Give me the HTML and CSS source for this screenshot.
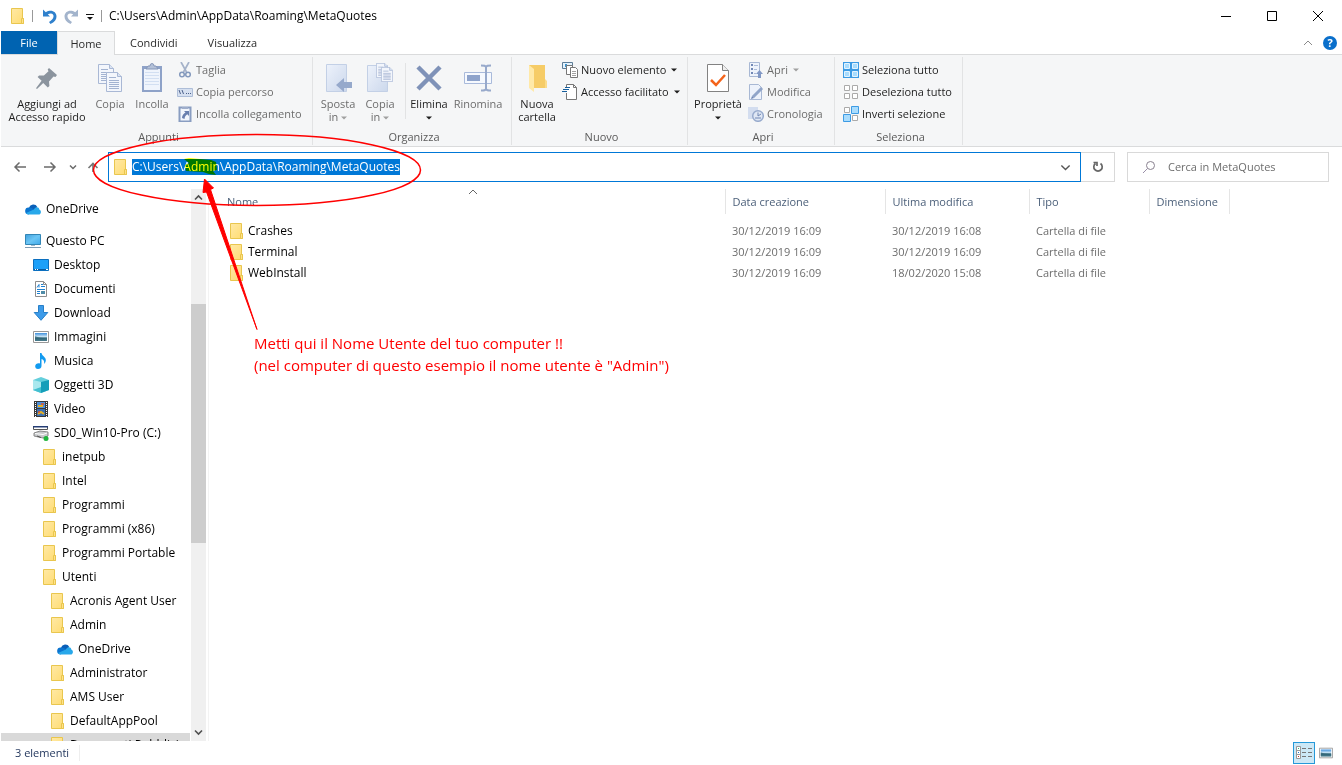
FILE: index.html
```html
<!DOCTYPE html>
<html lang="it">
<head>
<meta charset="utf-8">
<title>C:\Users\Admin\AppData\Roaming\MetaQuotes</title>
<link rel="stylesheet" href="styles.css">
</head>
<body>
<svg class="defs" aria-hidden="true">
  <defs>
    <linearGradient id="gFolder" x1="0" y1="0" x2="1" y2="1"><stop offset="0" stop-color="#ffe9a6"/><stop offset="1" stop-color="#ffdc72"/></linearGradient>
    <linearGradient id="gScreen" x1="0" y1="0" x2="1" y2="1"><stop offset="0" stop-color="#3f9fdc"/><stop offset=".5" stop-color="#6cc6f5"/><stop offset="1" stop-color="#3fa9ea"/></linearGradient>
    <linearGradient id="gPaper" x1="0" y1="0" x2="1" y2="1"><stop offset="0" stop-color="#edf2fb"/><stop offset="1" stop-color="#ccd8ec"/></linearGradient>
    <linearGradient id="gPic" x1="0" y1="0" x2="0" y2="1"><stop offset="0" stop-color="#3d8fdc"/><stop offset=".5" stop-color="#d6ecf7"/><stop offset=".6" stop-color="#2c6477"/><stop offset="1" stop-color="#7fa9b5"/></linearGradient>
    <symbol id="folder" viewBox="-1 0 16 16"><path d="M1.500.5h11v10h1v5h-12z" fill="url(#gFolder)" stroke="#e9c64e"/><path d="M11.500 15.500v-5h2v5z" fill="#ffe28a" stroke="#e9c64e"/></symbol>
    <symbol id="cloud" viewBox="0 0 16 16"><path d="M4 6.500a4.500 4.500 0 0 1 8.300-.6L8 10z" fill="#0a5fb8"/><path d="M3.500 13.500A3.500 3.500 0 0 1 3.800 6.500c2-.4 3.200.4 5.400 2z" fill="#0b74cf"/><path d="M9 8.600c1-3 5-3.200 5.300-.2 2.500 1 2 5.100-.8 5.100H3.500c-1 0-2-.6-2.500-1.500z" fill="#28a8ea"/></symbol>
    <symbol id="pc" viewBox="0 0 16 16"><path d="M.5 1.500h15v10H.5z" fill="url(#gScreen)" stroke="#3386b6"/><path d="M6 12.500h4" stroke="#9db8cc"/><path d="M0 14.500h16" stroke="#7f9cb4"/></symbol>
    <symbol id="desktop" viewBox="0 0 16 16"><path d="M.5 2.500h15v11H.5z" fill="#1ca0f9" stroke="#0b6fbf"/><path d="M1 12.500h14" stroke="#0a5ba0"/><path d="M2 12.500h1m1 0h1m8 0h2" stroke="#fff"/></symbol>
    <symbol id="doc" viewBox="0 0 16 16"><path d="M2.500.5h8l3 3v12h-11z" fill="#fff" stroke="#8d8d8d"/><path d="M10.500.5v3h3" fill="none" stroke="#8d8d8d"/><path d="M4 6.500l2-3v3M8 3.500h2M8 5.500h4M4 8.500h8M4 10.500h3M4 12.500h3" fill="none" stroke="#1e80d0"/><path d="M8 10h4v3H8z" fill="#4f8ca8"/></symbol>
    <symbol id="down" viewBox="0 0 16 16"><path d="M5.500.5h5v7h4.300L8 15.300 1.200 7.500h4.300z" fill="#3d9be9" stroke="#277fc8"/></symbol>
    <symbol id="pic" viewBox="0 0 16 16"><path d="M.5 2.500h15v11H.5z" fill="#fff" stroke="#989898"/><path d="M2 4h12v8H2z" fill="url(#gPic)"/><path d="M2 7l4 1.500 8 1V12H2z" fill="#295f72" opacity=".6"/></symbol>
    <symbol id="music" viewBox="0 0 16 16"><path d="M7 0h1.500c.3 3 4.700 4 4.300 7.500-.1 1.500-.8 2.500-1.800 3.500.8-3-.8-4.500-2.500-5v7c0 1.800-1.500 3-3.500 3S2.200 14.700 2.200 13.200c0-2 2.500-3.400 4.800-2.600z" fill="#129bf0"/></symbol>
    <symbol id="cube" viewBox="0 0 16 16"><path d="M0 3L8 0l8 3v10l-8 3-8-3z" fill="#64cfdc"/><path d="M8 5l8-2v10l-8 3z" fill="#159eb9"/><path d="M0 3l8 2v6l-8 2z" fill="#a9e8ee"/><path d="M0 13l8-3v6z" fill="#43bfd0"/></symbol>
    <symbol id="film" viewBox="0 0 16 16"><path d="M1 0h14v16H1z" fill="#383838"/><path d="M2.500 1v15M13.500 1v15" stroke="#fff" stroke-dasharray="1 1"/><path d="M4 1h8v6H4z" fill="#4d8ed8"/><path d="M4 8h8v7H4z" fill="#3a70b4"/><path d="M5 5h5M5 13l3-2 3 2" stroke="#e7b024" stroke-width="2" fill="none"/><path d="M8 3h3M5 11h2" stroke="#df5631" stroke-width="1.500"/></symbol>
    <symbol id="drive" viewBox="0 0 16 16"><path d="M.5 1.500h14v3H.5z" fill="#fff" stroke="#555"/><path d="M0 1h15v1.500H0z" fill="#243c74"/><path d="M1 8l6-2 8 1v4l-5 2-9-2z" fill="#c8cacc" stroke="#888"/><path d="M2 8.500l8 1 4-1.500" stroke="#fff" fill="none"/><path d="M4 11l4 1.500" stroke="#555"/><circle cx="13" cy="13.500" r="2.500" fill="#1eb53c"/></symbol>
    <symbol id="sheet" viewBox="0 0 16 20"><path d="M.5.500h11l4 4v15H.5z" fill="#f3f6fc" stroke="#a9b8d5"/><path d="M11.500.5v4h4" fill="#dbe4f3" stroke="#a9b8d5"/><path d="M3 5.500h7M3 8.500h10M3 10.500h10M3 12.500h10M3 14.500h10M3 16.500h10" stroke="#a3b3d1"/></symbol>
    <symbol id="chev" viewBox="0 0 8 8"><path d="M1 2.500l3 3 3-3" fill="none" stroke="currentColor"/></symbol>
    <symbol id="tri" viewBox="0 0 6 4"><path d="M0 .5h6l-3 3z" fill="currentColor"/></symbol>
  </defs>
</svg>

<div class="window">
  <header class="titlebar">
    <svg class="i16"><use href="#folder"/></svg>
    <span class="bar"></span>
    <div class="quickbar">
      <button class="plain" aria-label="Annulla"><svg class="i16" viewBox="0 0 16 16"><path d="M1 1.500v7h7L5.800 6.300C9.500 4.500 12 6 11.500 8.800c-.3 2-2 3.500-4.500 5.200l1.500 2c4-2 6-4.500 6-7.500C14.500 3.500 9 .8 3.800 4.200z" fill="#2f80cc"/></svg></button>
      <button class="plain" aria-label="Ripeti"><svg class="i16" viewBox="0 0 16 16"><path d="M14 1.500v7H7l2.200-2.200C5.500 4.500 3 6 3.500 8.800c.3 2 2 3.500 4.500 5.200l-1.500 2c-4-2-6-4.500-6-7.500C.5 3.500 6 .8 11.200 4.200z" fill="#a3b4cc"/></svg></button>
      <button class="plain quick" aria-label="Personalizza"><svg width="8" height="8" viewBox="0 0 8 8"><path d="M0 1.500h8" stroke="#111"/><path d="M1 4h6L4 7z" fill="#111"/></svg></button>
    </div>
    <span class="bar"></span>
    <h1>C:\Users\Admin\AppData\Roaming\MetaQuotes</h1>
    <div class="winbtns">
      <button class="plain" aria-label="Riduci a icona"><svg width="12" height="12" viewBox="0 0 12 12"><path d="M1 6.500h10" stroke="#000"/></svg></button>
      <button class="plain" aria-label="Ingrandisci"><svg width="12" height="12" viewBox="0 0 12 12"><path d="M1.500 1.500h9v9h-9z" fill="none" stroke="#000"/></svg></button>
      <button class="plain" aria-label="Chiudi"><svg width="12" height="12" viewBox="0 0 12 12"><path d="M1 1l10 10M11 1L1 11" stroke="#000"/></svg></button>
    </div>
  </header>

  <nav class="tabs">
    <button class="tab file">File</button>
    <button class="tab active">Home</button>
    <button class="tab">Condividi</button>
    <button class="tab">Visualizza</button>
    <div class="tabend">
      <button class="plain" aria-label="Riduci barra multifunzione"><svg width="10" height="8" viewBox="0 0 10 8"><path d="M1 6l4-4 4 4" fill="none" stroke="#8b8b8b"/></svg></button>
      <button class="plain help" aria-label="Guida">?</button>
    </div>
  </nav>

  <section class="ribbon">
    <div class="group g-clip">
      <div class="tools">
        <button class="big w-pin"><svg width="24" height="30" viewBox="0 0 24 30"><path d="M14 5l8 7-1.500 2-2-.4-4.500 5 .4 4.400-1.600 1.500-4.600-4.400L2 26l-1-.8 5.600-7.500-4-3.600 1.500-1.700 4.800.2 4.600-4.400-.8-1.700z" fill="#8b949e"/></svg>Aggiungi ad<br>Accesso rapido</button>
        <button class="big w-42 off"><svg width="26" height="30" viewBox="0 0 26 30"><use href="#sheet" x="1" y="1" width="16" height="20"/><use href="#sheet" x="9" y="9" width="16" height="20"/></svg>Copia</button>
        <button class="big w-42 off"><svg width="22" height="30" viewBox="0 0 22 30"><path d="M1 3h20v26H1z" fill="#8ea2c8"/><path d="M3 6h16v21H3z" fill="#eff4fc"/><path d="M4 9.500h14M4 12.500h14M4 15.500h14M4 18.500h14M4 21.500h14" stroke="#d2dff2"/><path d="M5 6l2-3h2a2 2.500 0 0 1 4 0h2l2 3z" fill="#b4c1d8" stroke="#8596b8"/></svg>Incolla</button>
        <div class="list">
          <button class="small off"><svg class="i16" viewBox="0 0 16 16"><path d="M4 0l5.500 10M12 0L6.500 10" stroke="#a5b2c9" stroke-width="1.700"/><circle cx="5" cy="12.500" r="2.300" fill="none" stroke="#8499bd" stroke-width="1.500"/><circle cx="11" cy="12.500" r="2.300" fill="none" stroke="#8499bd" stroke-width="1.500"/></svg>Taglia</button>
          <button class="small off"><svg class="i16" viewBox="0 0 16 16"><path d="M.5 4.500h15v8H.5z" fill="#d6e0f0" stroke="#aebed8"/><path d="M2 6l1.500 4M5 6l1.500 4M9 9.500h1m1 0h1m1 0h1" stroke="#4c618b"/></svg>Copia percorso</button>
          <button class="small off"><svg class="i16" viewBox="0 0 16 16"><path d="M2.500 1.500h11v14h-11z" fill="#f2f6fc" stroke="#899dc1" stroke-width="2"/><path d="M5 1h6v2H5z" fill="#9faecb"/><path d="M7 5h5v5l-1.700-1.700C8.500 9.500 7.700 11 7.500 13L5 12c0-2.500 1.500-4.200 3.500-5.500z" fill="#687fae"/></svg>Incolla collegamento</button>
        </div>
      </div>
      <div class="caption">Appunti</div>
    </div>
    <div class="group g-org">
      <div class="tools">
        <button class="big w-42 off"><svg width="28" height="30" viewBox="0 0 28 30"><path d="M2.500 1.500h20v27h-20z" fill="url(#gPaper)" stroke="#c3d0e6"/><path d="M12 22l8-7v4h8v6h-8v4z" fill="#96a9cb"/></svg>Sposta<br>in <svg class="tri"><use href="#tri"/></svg></button>
        <button class="big w-42 off"><svg width="28" height="30" viewBox="0 0 28 30"><path d="M1.500 2.500h20v26h-20z" fill="url(#gPaper)" stroke="#c3d0e6"/><use href="#sheet" x="10" y="0" width="12" height="15"/><use href="#sheet" x="15" y="4" width="12" height="15"/></svg>Copia<br>in <svg class="tri"><use href="#tri"/></svg></button>
        <span class="sep"></span>
        <button class="big w-46"><svg width="28" height="30" viewBox="0 0 28 30"><path d="M3 4l22 22M25 4L3 26" stroke="#7f92b8" stroke-width="4.500"/></svg>Elimina<br><svg class="tri"><use href="#tri"/></svg></button>
        <button class="big w-52 off"><svg width="30" height="30" viewBox="0 0 30 30"><path d="M1.500 9.500h27v11h-27z" fill="#f6f9fe" stroke="#a9badb"/><path d="M4 12h13v6H4z" fill="#8ea3cb"/><path d="M23 3v24M18 2.500c3 0 5 0 5 2 0-2 2-2 5-2M18 27.500c3 0 5 0 5-2 0 2 2 2 5 2" fill="none" stroke="#97a9cb" stroke-width="2"/></svg>Rinomina</button>
      </div>
      <div class="caption">Organizza</div>
    </div>
    <div class="group g-new">
      <div class="tools">
        <button class="big w-42"><svg width="26" height="30" viewBox="0 0 26 30"><path d="M5 2h16v15l2 2v6H8z" fill="#f6cc67"/><path d="M5 2l5 4v23l-5-4z" fill="#ffe9a8"/><path d="M21 16l2 2v7h-2z" fill="#fbdc8b"/></svg>Nuova<br>cartella</button>
        <div class="list">
          <button class="small"><svg class="i16" viewBox="0 0 16 16"><path d="M.5.500h10v6H.5z" fill="#e5f3fd" stroke="#5c7c97"/><path d="M3 2h2v3H3zm3 1h3v2H6z" fill="#3a93d0"/><path d="M4.500 3.500h6v9h-6z" fill="#fff" stroke="#777"/><path d="M8.500 5.500h5l2 2v8h-7z" fill="#fff" stroke="#777"/><path d="M10 9.500h4M10 11.500h4M10 13.500h4" stroke="#a1a1a1"/></svg>Nuovo elemento <svg class="tri"><use href="#tri"/></svg></button>
          <button class="small"><svg class="i16" viewBox="0 0 16 16"><path d="M4.500 4V.5h7l3 3v12h-10V9" fill="#fff" stroke="#777"/><path d="M11.500.5v3h3" fill="none" stroke="#777"/><path d="M3 3.500h5M1 5.500h6M0 7.500h5" stroke="#175f9d"/></svg>Accesso facilitato <svg class="tri"><use href="#tri"/></svg></button>
        </div>
      </div>
      <div class="caption">Nuovo</div>
    </div>
    <div class="group g-open">
      <div class="tools">
        <button class="big w-52"><svg width="22" height="30" viewBox="0 0 22 30"><path d="M.5 1.500h15l6 6v21H.5z" fill="#fff" stroke="#828282"/><path d="M15.500 1.500v6h6" fill="#eee" stroke="#828282"/><path d="M4 17l5 5 9-10" fill="none" stroke="#f4641b" stroke-width="2.500"/></svg>Proprietà<br><svg class="tri"><use href="#tri"/></svg></button>
        <div class="list">
          <button class="small off"><svg class="i16" viewBox="0 0 16 16"><path d="M1.500.5h10v14h-10z" fill="#eef3fb" stroke="#a8b8d4"/><path d="M3 2h2v2H3zm0 4h2v2H3zm0 4h2v2H3z" fill="#7188b5"/><path d="M6 3.500h4M6 7.500h3M6 11.500h2" stroke="#adbcd8"/><path d="M10 16v-4H8l3.500-4 3.500 4h-2v4z" fill="#8198c5"/></svg>Apri <svg class="tri"><use href="#tri"/></svg></button>
          <button class="small off"><svg class="i16" viewBox="0 0 16 16"><path d="M1.500.5h9l3 3v12h-12z" fill="#edf2fb" stroke="#a8b8d4"/><path d="M5 13L14 4" stroke="#91a5c9" stroke-width="3"/><path d="M3 15l1-3 2 2z" fill="#6f86b4"/></svg>Modifica</button>
          <button class="small off"><svg class="i16" viewBox="0 0 16 16"><path d="M0 1h10v12H0z" fill="#d3ddef"/><circle cx="10" cy="10" r="5.300" fill="#dfe7f4" stroke="#98abcd" stroke-width="1.500"/><path d="M10 6.500V10l3-2M7 12h6" stroke="#7087b3" fill="none"/></svg>Cronologia</button>
        </div>
      </div>
      <div class="caption">Apri</div>
    </div>
    <div class="group g-sel">
      <div class="tools">
        <div class="list">
          <button class="small"><svg class="i16" viewBox="0 0 16 16"><path d="M0 0h16v16H0z" fill="#3d9be4"/><path d="M1.500 1.500h5v5h-5zm8 0h5v5h-5zm-8 8h5v5h-5zm8 0h5v5h-5z" fill="#a9dcfd" stroke="#e3f4ff"/></svg>Seleziona tutto</button>
          <button class="small"><svg class="i16" viewBox="0 0 16 16"><path d="M1.500 1.500h5v5h-5zm8 0h5v5h-5zm-8 8h5v5h-5zm8 0h5v5h-5z" fill="#fff" stroke="#aaa"/></svg>Deseleziona tutto</button>
          <button class="small"><svg class="i16" viewBox="0 0 16 16"><path d="M1.500 1.500h5v5h-5zm8 8h5v5h-5z" fill="#fff" stroke="#aaa"/><path d="M8.500.500h7v7h-7zm-8 8h7v7h-7z" fill="#a9dcfd" stroke="#3d9be4"/></svg>Inverti selezione</button>
        </div>
      </div>
      <div class="caption">Seleziona</div>
    </div>
  </section>

  <section class="address">
    <div class="navbtns">
      <button class="plain nav-wide" aria-label="Indietro"><svg width="14" height="12" viewBox="0 0 14 12"><path d="M13 6H2M6.500 1.500L2 6l4.500 4.500" fill="none" stroke="#6b6b6b" stroke-width="1.500"/></svg></button>
      <button class="plain nav-mid" aria-label="Avanti"><svg width="14" height="12" viewBox="0 0 14 12"><path d="M1 6h11M7.500 1.500L12 6l-4.500 4.500" fill="none" stroke="#6b6b6b" stroke-width="1.500"/></svg></button>
      <button class="plain nav-small" aria-label="Percorsi recenti"><svg width="8" height="8" viewBox="0 0 8 8"><path d="M1 2.500l3 3 3-3" fill="none" stroke="#6b6b6b" stroke-width="1.500"/></svg></button>
      <button class="plain" aria-label="Su"><svg width="12" height="12" viewBox="0 0 12 12"><path d="M6 11V3M1.500 7L6 2.500 10.500 7" fill="none" stroke="#777" stroke-width="1.700"/></svg></button>
    </div>
    <div class="pathbox">
      <svg class="i16"><use href="#folder"/></svg>
      <div class="pathwrap">
        <input class="path" type="text" size="42" aria-label="Indirizzo" value="C:\Users\Admin\AppData\Roaming\MetaQuotes">
        <svg class="marker" width="40" height="22" viewBox="0 0 40 22"><path d="M3 3l5-1 22 2 5 2 1 8-4 1 3 4-7-1-6-2-17-1-1-6 4-2z" fill="#ff0"/></svg>
      </div>
      <button class="plain" aria-label="Località precedenti"><svg width="11" height="11"><use href="#chev"/></svg></button>
    </div>
    <button class="refresh" aria-label="Aggiorna"><svg width="12" height="12" viewBox="0 0 12 12"><path d="M8.500 2.500a4.200 4.200 0 1 1-5 0M1.500 1.500H5V5" fill="none" stroke="#666" stroke-width="1.700"/></svg></button>
    <label class="search"><svg width="14" height="14" viewBox="0 0 14 14"><circle cx="8.500" cy="5.500" r="4" fill="none" stroke="#8a8290"/><path d="M5.500 8.500L1 13" stroke="#9a8fa8"/></svg><input type="search" placeholder="Cerca in MetaQuotes" aria-label="Cerca in MetaQuotes"></label>
  </section>

  <main class="body">
    <nav class="tree">
      <ul>
        <li class="l0 gap"><svg class="i16"><use href="#cloud"/></svg>OneDrive</li>
        <li class="l0"><svg class="i16"><use href="#pc"/></svg>Questo PC</li>
        <li class="l1"><svg class="i16"><use href="#desktop"/></svg>Desktop</li>
        <li class="l1"><svg class="i16"><use href="#doc"/></svg>Documenti</li>
        <li class="l1"><svg class="i16"><use href="#down"/></svg>Download</li>
        <li class="l1"><svg class="i16"><use href="#pic"/></svg>Immagini</li>
        <li class="l1"><svg class="i16"><use href="#music"/></svg>Musica</li>
        <li class="l1"><svg class="i16"><use href="#cube"/></svg>Oggetti 3D</li>
        <li class="l1"><svg class="i16"><use href="#film"/></svg>Video</li>
        <li class="l1"><svg class="i16"><use href="#drive"/></svg>SD0_Win10-Pro (C:)</li>
        <li class="l2"><svg class="i16"><use href="#folder"/></svg>inetpub</li>
        <li class="l2"><svg class="i16"><use href="#folder"/></svg>Intel</li>
        <li class="l2"><svg class="i16"><use href="#folder"/></svg>Programmi</li>
        <li class="l2"><svg class="i16"><use href="#folder"/></svg>Programmi (x86)</li>
        <li class="l2"><svg class="i16"><use href="#folder"/></svg>Programmi Portable</li>
        <li class="l2"><svg class="i16"><use href="#folder"/></svg>Utenti</li>
        <li class="l3"><svg class="i16"><use href="#folder"/></svg>Acronis Agent User</li>
        <li class="l3"><svg class="i16"><use href="#folder"/></svg>Admin</li>
        <li class="l4"><svg class="i16"><use href="#cloud"/></svg>OneDrive</li>
        <li class="l3"><svg class="i16"><use href="#folder"/></svg>Administrator</li>
        <li class="l3"><svg class="i16"><use href="#folder"/></svg>AMS User</li>
        <li class="l3"><svg class="i16"><use href="#folder"/></svg>DefaultAppPool</li>
        <li class="l3 sel"><svg class="i16"><use href="#folder"/></svg>Documenti Pubblici</li>
      </ul>
    </nav>
    <div class="scroll">
      <svg width="9" height="9" viewBox="0 0 9 9"><path d="M1 6.500L4.500 3 8 6.500" fill="none" stroke="#505050" stroke-width="1.600"/></svg>
      <div class="track"><div class="thumb"></div></div>
      <svg width="9" height="9" viewBox="0 0 9 9"><path d="M1 2.500L4.500 6 8 2.500" fill="none" stroke="#505050" stroke-width="1.600"/></svg>
    </div>
    <div class="files">
      <table>
        <colgroup><col class="c-name"><col class="c-made"><col class="c-mod"><col class="c-type"><col class="c-size"></colgroup>
        <thead><tr><th>Nome<svg class="sort" width="10" height="6" viewBox="0 0 10 6"><path d="M1 5l4-4 4 4" fill="none" stroke="#666"/></svg></th><th>Data creazione</th><th>Ultima modifica</th><th>Tipo</th><th>Dimensione</th></tr></thead>
        <tbody>
          <tr><td><span class="name"><svg class="i16"><use href="#folder"/></svg>Crashes</span></td><td>30/12/2019 16:09</td><td>30/12/2019 16:08</td><td>Cartella di file</td><td></td></tr>
          <tr><td><span class="name"><svg class="i16"><use href="#folder"/></svg>Terminal</span></td><td>30/12/2019 16:09</td><td>30/12/2019 16:09</td><td>Cartella di file</td><td></td></tr>
          <tr><td><span class="name"><svg class="i16"><use href="#folder"/></svg>WebInstall</span></td><td>30/12/2019 16:09</td><td>18/02/2020 15:08</td><td>Cartella di file</td><td></td></tr>
        </tbody>
      </table>
      <p class="note">Metti qui il Nome Utente del tuo computer !!<br>(nel computer di questo esempio il nome utente è "Admin")</p>
    </div>
  </main>

  <footer class="status">
    <span class="count">3 elementi</span>
    <div class="views">
      <button class="view on" aria-label="Dettagli"><svg width="16" height="14" viewBox="0 0 16 14"><path d="M.5.500h4v4h-4zm0 4h4v4h-4zm0 4h4v4h-4z" fill="#fff" stroke="#999"/><path d="M2 2.500h1" stroke="#3b7"/><path d="M2 6.500h1" stroke="#27c"/><path d="M2 10.500h1" stroke="#c32"/><path d="M6 2.500h4m2 0h4M6 6.500h4m2 0h4M6 10.500h4m2 0h4" stroke="#777"/></svg></button>
      <button class="view" aria-label="Icone grandi"><svg width="14" height="16" viewBox="0 0 16 16"><use href="#pic"/></svg></button>
    </div>
  </footer>

  <svg class="ink" width="460" height="340" viewBox="0 0 460 340" aria-hidden="true"><ellipse cx="257" cy="170" rx="163.500" ry="35.500" fill="none" stroke="#f00" stroke-width="1.500"/><path d="M204.500 179l9 9-3 1.500L257 329.500 206.500 192l-3.500.5z" fill="#f00" stroke="#f00"/></svg>
</div>
</body>
</html>
```
FILE: styles.css
```css
* { box-sizing: border-box; }
html, body { height: 100%; margin: 0; }
body { background: #fff; color: #000; font: 12px/16px "Open Sans", "Noto Sans", sans-serif; overflow: hidden; }
button, input { font: inherit; color: inherit; border: 0; padding: 0; margin: 0; background: none; }
input { outline: 0; min-width: 0; }
svg { display: block; flex: none; }
.defs { position: absolute; width: 0; height: 0; }
.i16 { width: 16px; height: 16px; }
.plain { display: flex; align-items: center; justify-content: center; }

.window { position: relative; display: flex; flex-direction: column; height: 100%; padding-left: 1px; }

.titlebar { display: flex; align-items: center; height: 31px; padding-left: 8px; gap: 7px; flex: none; }
.titlebar h1 { margin: 0; font-size: 12px; line-height: 16px; font-weight: 400; }
.bar { width: 1px; height: 12px; background: #999; }
.quickbar { display: flex; gap: 6px; padding-left: 2px; }
.quick { width: 8px; padding-top: 2px; }
.winbtns { display: flex; margin-left: auto; padding-right: 1px; }
.winbtns .plain { width: 46px; height: 30px; }

.tabs { display: flex; height: 24px; flex: none; border-bottom: 1px solid #dadbdc; font-size: 11px; }
.tab { height: 23px; padding: 0 15px; color: #2b2b2b; }
.tab.file { width: 56px; background: #0063b1; color: #fff; }
.tab.active { width: 58px; height: 24px; padding: 0; background: #f5f6f7; border: 1px solid #dadbdc; border-bottom: 0; }
.tabend { display: flex; align-items: center; gap: 10px; margin-left: auto; padding-right: 5px; }
.help { width: 14px; height: 14px; border-radius: 50%; background: #0a6fcb; color: #fff; line-height: 14px; font-weight: 700; }

.ribbon { display: flex; flex: none; height: 92px; background: #f5f6f7; border-bottom: 1px solid #dadbdc; padding-top: 2px; font-size: 11px; }
.group { display: flex; flex-direction: column; padding-left: 4px; border-right: 1px solid #e2e3e4; height: 88px; }
.g-clip { width: 312px; }
.g-org { width: 199px; }
.g-new { width: 176px; }
.g-open { width: 147px; }
.g-sel { width: 128px; }
.tools { display: flex; flex: 1; }
.caption { height: 16px; line-height: 16px; text-align: center; color: #5a5a5a; }
.big { display: block; padding-top: 6px; line-height: 13px; text-align: center; white-space: nowrap; align-self: flex-start; color: #1e1e1e; }
.big > svg:first-child { margin: 0 auto 4px; }
.off { color: #6d6d6d; }
.tri { display: inline-block; width: 6px; height: 4px; vertical-align: middle; }
.off .tri { color: #a0a0a0; }
.w-pin { width: 84px; }
.w-42 { width: 42px; }
.w-46 { width: 46px; }
.w-52 { width: 52px; }
.sep { width: 1px; height: 56px; margin: 6px 0 0 4px; background: #e2e3e4; }
.list { display: flex; flex-direction: column; padding: 2px 0 0 4px; }
.small { display: flex; align-items: center; gap: 3px; height: 22px; white-space: nowrap; color: #1e1e1e; }
.small .tri { margin-left: 2px; }
.small.off { color: #6d6d6d; }

.address { display: flex; align-items: center; flex: none; height: 40px; padding-right: 13px; }
.navbtns { display: flex; align-items: center; width: 107px; padding-left: 12px; }
.navbtns .plain { justify-content: flex-start; }
.nav-wide { width: 30px; }
.nav-mid { width: 26px; }
.nav-small { width: 18px; }
.pathbox { display: flex; flex: 1; align-items: center; height: 30px; border: 1px solid #0078d7; padding: 0 9px 0 3px; color: #555; }
.pathwrap { position: relative; flex: 1; margin-left: 4px; }
.path { display: block; width: 268px; field-sizing: content; height: 16px; background: #0078d7; color: #fff; }
.marker { position: absolute; left: 49px; top: -3px; mix-blend-mode: multiply; }
.refresh { display: flex; align-items: center; justify-content: center; width: 34px; height: 30px; border: 1px solid #d9d9d9; border-left: 0; }
.search { display: flex; align-items: center; gap: 12px; width: 202px; height: 30px; margin-left: 12px; padding-left: 14px; border: 1px solid #d9d9d9; font-size: 11px; }
.search input { flex: 1; }
.search input::placeholder { color: #6d6d6d; opacity: 1; }

.body { display: flex; flex: 1; min-height: 0; padding-top: 2px; }
.tree { width: 190px; overflow: hidden; flex: none; }
.tree ul { list-style: none; margin: 0; padding: 8px 1px 0 0; }
.tree li { display: flex; align-items: center; gap: 5px; height: 24px; white-space: nowrap; }
.tree .gap { margin-bottom: 8px; }
.l0 { padding-left: 24px; }
.l1 { padding-left: 32px; }
.l2 { padding-left: 40px; }
.l3 { padding-left: 48px; }
.l4 { padding-left: 56px; }
.sel { background: #d9d9d9; }
.scroll { display: flex; flex-direction: column; align-items: center; gap: 4px; width: 15px; padding: 4px 0; background: #f0f0f0; flex: none; }
.track { display: flex; flex-direction: column; flex: 1; width: 100%; padding-top: 98px; }
.thumb { height: 57%; flex: none; background: #cdcdcd; }
.files { flex: 1; margin-left: 2px; padding-left: 11px; border-left: 1px solid #f3f3f3; }

table { border-collapse: collapse; table-layout: fixed; width: 1009px; font-size: 11px; }
.c-name { width: 505px; }
.c-made { width: 160px; }
.c-mod { width: 144px; }
.c-type { width: 120px; }
.c-size { width: 80px; }
th { position: relative; height: 25px; padding: 0 0 0 7px; text-align: left; font-weight: 400; color: #4c607a; border-right: 1px solid #e5e5e5; }
.sort { position: absolute; top: 0; left: 248px; }
td { height: 21px; padding: 0 0 0 7px; color: #6d6d6d; white-space: nowrap; }
tbody::before { content: ""; display: block; height: 6px; }
.name { display: flex; align-items: center; gap: 4px; padding-left: 1px; font-size: 12px; color: #000; }
.note { margin: 49px 0 0 34px; font-size: 15px; line-height: 22px; color: #f00; }

.status { display: flex; align-items: center; justify-content: space-between; flex: none; height: 24px; padding: 0 5px 0 14px; font-size: 11px; color: #24385e; }
.count { border-right: 1px solid #eee; padding-right: 10px; }
.views { display: flex; }
.view { display: flex; align-items: center; justify-content: center; width: 22px; height: 22px; }
.view.on { border: 1px solid #2699d9; background: #cce8f6; }
.ink { position: absolute; left: 0; top: 0; pointer-events: none; }
```
